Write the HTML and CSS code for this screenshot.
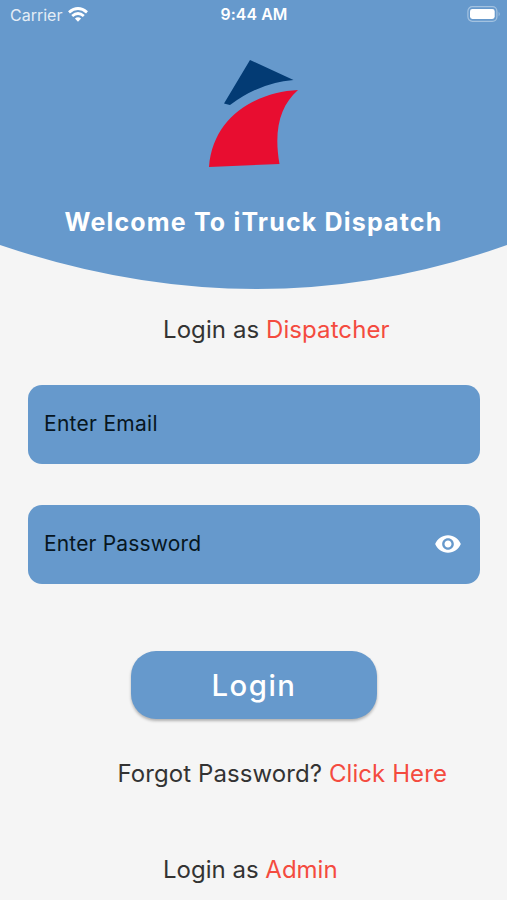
FILE: index.html
```html
<!DOCTYPE html>
<html lang="en">
<head>
<meta charset="utf-8">
<title>iTruck Dispatch</title>
<link rel="stylesheet" href="styles.css">
</head>
<body>
<div class="screen">
  <header class="hero">
    <svg class="hero-curve" viewBox="0 0 507 44" preserveAspectRatio="none"><path d="M0 0Q260 88 507 0Z" fill="#6699cc"/></svg>
    <div class="status">
      <div class="network">
        <span class="carrier">Carrier</span>
        <svg class="wifi" width="20" height="15" viewBox="0 0 20 15" fill="none" stroke="#fff" stroke-width="2.9"><path d="M1 5.3Q10-2.1 19 5.3M4.2 9Q10 4.1 15.8 9"/><path d="M10 14.7L6.900 11.500Q10 9.100 13.100 11.500Z" fill="#fff" stroke="none"/></svg>
      </div>
      <time class="clock">9:44 AM</time>
      <svg class="battery" width="34" height="16" viewBox="0 0 34 16"><rect x=".9" y=".7" width="29" height="14.6" rx="4.5" fill="none" stroke="#a3c2e0" stroke-width="1.2"/><rect x="3" y="3" width="24.7" height="10" rx="2.4" fill="#fff"/><path d="M31.7 5.7q2 2.3 0 4.6z" fill="#a3c2e0"/></svg>
    </div>
    <svg class="logo" width="90" height="108" viewBox="0 0 90 108"><path d="M42 0L85.5 20Q52 22.500 22 45L16 43.500Z" fill="#033b74"/><path d="M90 30C72 46 65.500 70 71.500 104L1 107C5 55 50 32 90 30Z" fill="#e80d30"/></svg>
    <h1 class="title">Welcome To iTruck Dispatch</h1>
  </header>
  <main class="form">
    <p class="note role">Login as <a class="link">Dispatcher</a></p>
    <div class="field"><span>Enter Email</span></div>
    <div class="field password"><span>Enter Password</span>
      <svg class="eye" width="28" height="28" viewBox="0 0 24 24" fill="#fff"><path d="M12 4.500C7 4.500 2.730 7.610 1 12c1.730 4.390 6 7.500 11 7.500s9.270-3.110 11-7.500c-1.730-4.390-6-7.500-11-7.500zM12 17c-2.760 0-5-2.240-5-5s2.240-5 5-5 5 2.240 5 5-2.240 5-5 5zm0-8c-1.660 0-3 1.340-3 3s1.340 3 3 3 3-1.340 3-3-1.340-3-3-3z"/></svg>
    </div>
    <button class="login">Login</button>
    <p class="note forgot">Forgot Password? <a class="link">Click Here</a></p>
    <p class="note admin">Login as <a class="link">Admin</a></p>
  </main>
</div>
</body>
</html>
```
FILE: styles.css
```css
* { box-sizing: border-box; }
body { margin: 0; background: #f5f5f5; font-family: Inter, sans-serif; }
.screen { height: 900px; overflow: hidden; display: flex; flex-direction: column; }
.hero { position: relative; height: 245px; flex: none; background: #6699cc; display: flex; flex-direction: column; align-items: center; }
.hero-curve { position: absolute; top: 100%; left: 0; width: 100%; height: 44px; }
.status { width: 100%; height: 29px; padding: 0 6px 0 10px; display: grid; grid-template-columns: 1fr auto 1fr; align-items: center; color: #fff; font-size: 16px; }
.network { display: flex; align-items: center; gap: 6px; }
.carrier { color: #e4edf6; }
.clock { font-weight: 600; font-size: 15.8px; letter-spacing: 0.1px; margin-right: 3px; }
.battery { justify-self: end; margin-top: -1px; }
.logo { margin: 31px 2px 0 0; }
.title { margin: 38px 0 0; font-size: 25px; line-height: 32px; font-weight: 700; letter-spacing: 1.17px; color: #fff; white-space: nowrap; }
.form { display: flex; flex-direction: column; padding: 69px 27px 0 28px; }
.note { margin: 0; font-size: 24px; line-height: 32px; letter-spacing: 0.08px; color: #333; white-space: nowrap; }
.role { margin: 0 0 38.5px 135px; }
.link { color: #f44b3f; }
.field { height: 79.5px; margin-bottom: 40.5px; padding: 0 18px 2px 16px; border-radius: 14px; background: #6699cc; color: #071621; font-size: 21px; display: flex; align-items: center; justify-content: space-between; letter-spacing: 0.28px; }
.password { letter-spacing: 0.17px; }
.eye { margin-top: 2px; }
.login { align-self: center; width: 246px; height: 68px; margin-top: 26.5px; border: 0; border-radius: 25px; background: #6699cc; color: #fff; font: 500 29.3px Inter, sans-serif; letter-spacing: 1.5px; box-shadow: 0 2px 3px rgba(0,0,0,.28); }
.forgot { margin: 39px 0 0 89.5px; }
.admin { margin: 64px 0 0 135px; letter-spacing: 0; }
```
